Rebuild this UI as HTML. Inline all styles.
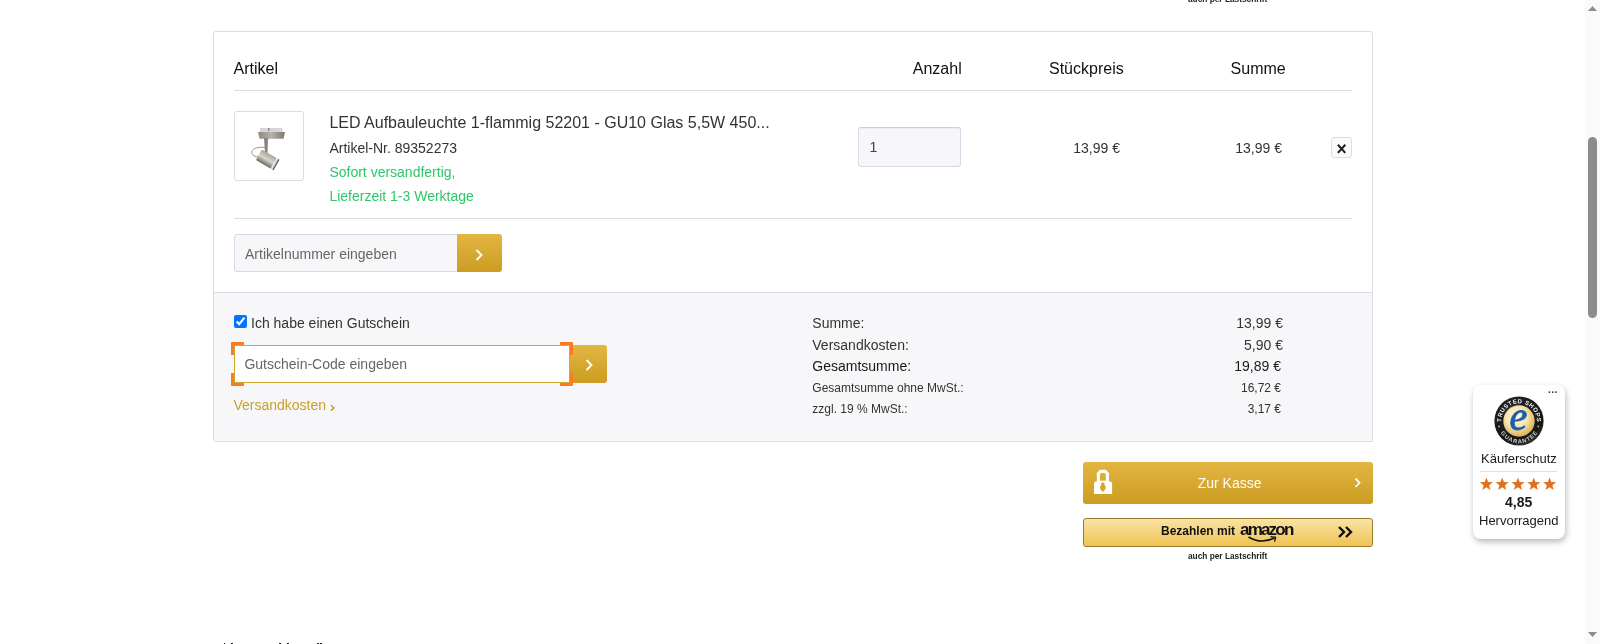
<!DOCTYPE html>
<html><head><meta charset="utf-8">
<style>
*{box-sizing:border-box;margin:0;padding:0}
html,body{width:1600px;height:644px;overflow:hidden;background:#fff;font-family:"Liberation Sans",sans-serif;color:#333}
body{position:relative}
.a{position:absolute;white-space:nowrap;line-height:1}
#wrap{position:absolute;left:0;top:0;width:1600px;height:644px;will-change:transform}
.f16{font-size:16px}.f14{font-size:14px}.f13{font-size:13px}.f12{font-size:12px}
.r{text-align:right}
.gold{background:linear-gradient(#e3b642,#cc9c22)}
.chev{position:absolute;width:7px;height:7px;border-top:2px solid #fff;border-right:2px solid #fff;transform:rotate(45deg)}
</style></head><body><div id="wrap">

<!-- top cut-off amazon label -->
<div class="a" style="left:1188px;top:-5px;font-size:8.3px;font-weight:bold;color:#222;letter-spacing:0">auch per Lastschrift</div>

<!-- card -->
<div class="a" style="left:213px;top:31px;width:1160px;height:411px;border:1px solid #dcdce6;border-radius:3px 3px 1px 3px;background:#fff"></div>
<div class="a" style="left:214px;top:292px;width:1158px;height:149px;background:#f7f7fa;border-top:1px solid #dcdce6;border-radius:0 0 2px 2px"></div>

<div class="a f16" style="left:233.6px;top:61px;color:#111">Artikel</div>
<div class="a f16 r" style="left:861.7px;width:100px;top:61px;color:#111">Anzahl</div>
<div class="a f16 r" style="left:1023.7px;width:100px;top:61px;color:#111">Stückpreis</div>
<div class="a f16 r" style="left:1185.7px;width:100px;top:61px;color:#111">Summe</div>
<div class="a" style="left:234px;top:90px;width:1118px;height:1px;background:#dcdce6"></div>

<!-- product image -->
<div class="a" style="left:234px;top:111px;width:70px;height:70px;border:1px solid #dcdce6;border-radius:3px;background:#fff;overflow:hidden">
<svg width="68" height="68" viewBox="0 0 68 68" style="position:absolute;left:0;top:0">
  <defs>
    <linearGradient id="met" x1="0" x2="1"><stop offset="0" stop-color="#8f8a7e"/><stop offset=".5" stop-color="#b6b2a8"/><stop offset="1" stop-color="#7d786c"/></linearGradient>
    <linearGradient id="cyl" x1="0" y1="0" x2="0" y2="1"><stop offset="0" stop-color="#a9a497"/><stop offset=".5" stop-color="#d8d5cc"/><stop offset="1" stop-color="#6e695e"/></linearGradient>
  </defs>
  <rect x="25" y="16" width="22.5" height="4" fill="#d4d6dc"/><rect x="33" y="16" width="1.5" height="3" fill="#8d8a84"/>
  <polygon points="23,20 50,20 48.5,26.8 24.5,26.8" fill="url(#met)"/>
  <path d="M29 26 H33 L32.5 42 H30 Z" fill="#8a857a"/>
  <path d="M30 35.5 C 20 34, 13 39, 19 44 L 23 45" stroke="#9b978d" stroke-width="1" fill="none"/>
  <g transform="rotate(30 32 47.5)">
    <rect x="22.5" y="41.5" width="19" height="12" rx="1.5" fill="url(#cyl)"/>
    <rect x="39.5" y="41.5" width="2.5" height="12" fill="#e8e8ea"/>
    <rect x="41.5" y="41.5" width="1.5" height="12" fill="#6a655a"/>
  </g>
</svg>
</div>

<div class="a f16" style="left:329.4px;top:115px;color:#333">LED Aufbauleuchte 1-flammig 52201 - GU10 Glas 5,5W 450...</div>
<div class="a f14" style="left:329.4px;top:141px;color:#333">Artikel-Nr. 89352273</div>
<div class="a f14" style="left:329.4px;top:165px;color:#2ec66a">Sofort versandfertig,</div>
<div class="a f14" style="left:329.4px;top:189px;color:#2ec66a">Lieferzeit 1-3 Werktage</div>

<div class="a" style="left:858px;top:127px;width:103px;height:40px;border:1px solid #d8d8e4;border-top-color:#cfcfdc;border-radius:3px;background:#f7f7fa;box-shadow:inset 0 1px 0 rgba(0,0,30,.04)"></div>
<div class="a f14" style="left:869.6px;top:140px;color:#444">1</div>

<div class="a f14 r" style="left:1020px;width:100px;top:141px;color:#333">13,99 €</div>
<div class="a f14 r" style="left:1182px;width:100px;top:141px;color:#333">13,99 €</div>

<div class="a" style="left:1331px;top:137px;width:21px;height:21px;border:1px solid #dcdce6;border-radius:3px;background:#fafafc"></div>
<svg class="a" style="left:1336px;top:143px" width="11" height="11" viewBox="0 0 11 11"><path d="M1.9 1.7 L9.3 9.9 M9.3 1.7 L1.9 9.9" stroke="#222" stroke-width="2.1"/></svg>

<div class="a" style="left:234px;top:218px;width:1118px;height:1px;background:#dcdce6"></div>

<!-- Artikelnummer -->
<div class="a" style="left:234px;top:234px;width:224px;height:38px;border:1px solid #d8d8e4;border-radius:3px 0 0 3px;background:#f7f7fa"></div>
<div class="a f14" style="left:245px;top:247px;color:#666">Artikelnummer eingeben</div>
<div class="a gold" style="left:457px;top:234px;width:45px;height:38px;border-radius:0 3px 3px 0"></div>
<svg class="a" style="left:475px;top:249px" width="9" height="12" viewBox="0 0 9 12"><path d="M1.5 1 L6.5 6 L1.5 11" stroke="#fff" stroke-width="1.85" fill="none"/></svg>

<!-- footer left -->
<input type="checkbox" checked class="a" style="left:234px;top:315px;width:13px;height:13px;margin:0">
<div class="a f14" style="left:251px;top:316px;color:#333">Ich habe einen Gutschein</div>

<div class="a" style="left:234px;top:345px;width:336px;height:38px;border:1px solid #d4a52c;background:#fff"></div>
<div class="a f14" style="left:244.4px;top:357px;color:#666">Gutschein-Code eingeben</div>
<div class="a gold" style="left:570px;top:345px;width:37px;height:38px;border-radius:0 3px 3px 0"></div>
<svg class="a" style="left:584.5px;top:359px" width="9" height="12" viewBox="0 0 9 12"><path d="M1.5 1 L6.5 6 L1.5 11" stroke="#fff" stroke-width="1.85" fill="none"/></svg>
<!-- orange corner marks -->
<div class="a" style="left:231px;top:342px;width:13px;height:3px;background:#fb7a24"></div>
<div class="a" style="left:231px;top:342px;width:3px;height:13px;background:#fb7a24"></div>
<div class="a" style="left:231px;top:383px;width:13px;height:3px;background:#fb7a24"></div>
<div class="a" style="left:231px;top:373px;width:3px;height:13px;background:#fb7a24"></div>
<div class="a" style="left:560px;top:342px;width:13px;height:3px;background:#fb7a24"></div>
<div class="a" style="left:570px;top:342px;width:3px;height:13px;background:#fb7a24"></div>
<div class="a" style="left:560px;top:383px;width:13px;height:3px;background:#fb7a24"></div>
<div class="a" style="left:570px;top:373px;width:3px;height:13px;background:#fb7a24"></div>

<div class="a f14" style="left:233.4px;top:398px;color:#c9a02c">Versandkosten</div>
<svg class="a" style="left:329px;top:403px" width="8" height="10" viewBox="0 0 8 10"><path d="M1.9 2.2 L5 4.9 L1.9 7.6" stroke="#c9a02c" stroke-width="1.5" fill="none"/></svg>

<!-- summary -->
<div class="a f14" style="left:812.3px;top:316px;color:#333">Summe:</div>
<div class="a f14 r" style="left:1183px;width:100px;top:316px;color:#333">13,99 €</div>
<div class="a f14" style="left:812.3px;top:338px;color:#333">Versandkosten:</div>
<div class="a f14 r" style="left:1183px;width:100px;top:338px;color:#333">5,90 €</div>
<div class="a f14" style="left:812.3px;top:359px;color:#1a1a1a">Gesamtsumme:</div>
<div class="a f14 r" style="left:1181px;width:100px;top:359px;color:#1a1a1a">19,89 €</div>
<div class="a f12" style="left:812.3px;top:382px;color:#333">Gesamtsumme ohne MwSt.:</div>
<div class="a f12 r" style="left:1181px;width:100px;top:382px;color:#333">16,72 €</div>
<div class="a f12" style="left:812.3px;top:403px;color:#333">zzgl. 19 % MwSt.:</div>
<div class="a f12 r" style="left:1181px;width:100px;top:403px;color:#333">3,17 €</div>

<!-- Zur Kasse -->
<div class="a gold" style="left:1083px;top:462px;width:290px;height:42px;border-radius:3px"></div>
<svg class="a" style="left:1093px;top:468px" width="20" height="28" viewBox="0 0 20 28">
  <path d="M5.4 15 V5.6 L7.7 3.3 H12.1 L14.4 5.6 V15" stroke="#fff" stroke-width="3.2" fill="none"/>
  <path d="M1 15 L2.5 13.5 H17.6 L19.1 15 V26 H1 Z" fill="#fff"/>
  <rect x="6.5" y="12.7" width="7" height="2" fill="#fff"/><path d="M8.3 14.8 C8.8 14.3 10.9 14.3 11.4 14.8 L11.5 17 C12.9 17.8 13.1 20.6 11.8 22 L9.85 24 L7.9 22 C6.6 20.6 6.8 17.8 8.2 17 Z" fill="#d4a630"/>
</svg>
<div class="a f14" style="left:1197.7px;top:476px;color:#fffdf5">Zur Kasse</div>
<svg class="a" style="left:1353px;top:477px" width="9" height="12" viewBox="0 0 9 12"><path d="M2.5 1.6 L6.6 5.8 L2.5 10" stroke="#fff" stroke-width="1.7" fill="none"/></svg>

<!-- amazon pay -->
<div class="a" style="left:1083px;top:518px;width:290px;height:29px;border:1px solid #9b7b2c;border-radius:3px;background:linear-gradient(#f8e3a6,#f0c453)"></div>
<div class="a" style="left:1161px;top:525px;font-size:12px;font-weight:bold;color:#111">Bezahlen mit</div>
<div class="a" style="left:1240px;top:521px;font-size:17px;font-weight:bold;color:#111;letter-spacing:-1.8px">amazon</div>
<svg class="a" style="left:1247px;top:535px" width="32" height="9" viewBox="0 0 32 9"><path d="M1.5 2 Q 14 9.5 27.5 3" stroke="#111" stroke-width="1.7" fill="none"/><path d="M23.5 1.6 L28.6 2.4 L27.6 6.6" stroke="#111" stroke-width="1.3" fill="none"/></svg>
<svg class="a" style="left:1337px;top:525px" width="17" height="14" viewBox="0 0 17 14"><path d="M2 2 L7 7 L2 12 M9 2 L14 7 L9 12" stroke="#111" stroke-width="2.4" fill="none"/></svg>
<div class="a" style="left:1188px;top:552px;font-size:8.3px;font-weight:bold;color:#222;letter-spacing:0">auch per Lastschrift</div>

<!-- bottom cut-off text marks -->
<div class="a" style="left:223.6px;top:643px;width:1.8px;height:1px;background:#222"></div>
<div class="a" style="left:231px;top:643px;width:2px;height:1px;background:#222"></div>
<div class="a" style="left:278.8px;top:643px;width:1.8px;height:1px;background:#222"></div>
<div class="a" style="left:287px;top:643px;width:2px;height:1px;background:#222"></div>
<div class="a" style="left:317px;top:643px;width:1.8px;height:1px;background:#222"></div>
<div class="a" style="left:320.2px;top:643px;width:1.8px;height:1px;background:#222"></div>

<!-- trusted shops badge -->
<div class="a" style="left:1473px;top:385px;width:92px;height:154px;background:#fff;border-radius:8px;box-shadow:1px 3px 6px rgba(0,0,0,.28)"></div>
<div class="a" style="left:1548px;top:385px;font-size:10px;font-weight:bold;color:#333;letter-spacing:0.5px">...</div>
<svg class="a" style="left:1494px;top:396px" width="50" height="50" viewBox="0 0 50 50">
  <defs>
    <radialGradient id="gg" cx=".42" cy=".38" r=".65"><stop offset="0" stop-color="#fffdf0"/><stop offset=".55" stop-color="#f5e2a8"/><stop offset="1" stop-color="#d8ae4c"/></radialGradient>
    <radialGradient id="rg" cx=".4" cy=".3" r=".75"><stop offset="0" stop-color="#2a2a2a"/><stop offset=".8" stop-color="#151515"/><stop offset="1" stop-color="#3a3a3a"/></radialGradient>
    <path id="tp" d="M7.47 28.1 A17.8 17.8 0 1 1 42.53 28.1"/>
    <path id="bp" d="M3.7 26 A21.3 21.3 0 0 0 46.3 26"/>
  </defs>
  <circle cx="25" cy="25" r="24.6" fill="url(#rg)"/>
  <circle cx="25" cy="25" r="15.7" fill="url(#gg)"/>
  <text font-family="Liberation Sans" font-weight="bold" font-size="6" fill="#eeeeee"><textPath href="#tp" startOffset="50%" text-anchor="middle" textLength="57" lengthAdjust="spacing">TRUSTED SHOPS</textPath></text>
  <text font-family="Liberation Sans" font-weight="bold" font-size="5.8" fill="#d0d0d0"><textPath href="#bp" startOffset="50%" text-anchor="middle" textLength="44" lengthAdjust="spacing">GUARANTEE</textPath></text>
  <circle cx="5" cy="30.5" r="0.9" fill="#e0b040"/>
  <circle cx="44.3" cy="30.5" r="0.9" fill="#e0b040"/>
  <text x="24.5" y="34" text-anchor="middle" font-family="Liberation Serif" font-style="italic" font-size="40" fill="#1d5fa9" stroke="#1d5fa9" stroke-width="0.9">e</text>
</svg>
<div class="a f13" style="left:1481px;top:452px;color:#1a1a1a">Käuferschutz</div>
<div class="a" style="left:1480px;top:471px;width:77px;height:1px;background:#e0e0e0"></div>
<svg class="a" style="left:1478px;top:476px" width="82" height="16" viewBox="0 0 82 16"><polygon points="8.40,1.40 10.10,5.96 14.96,6.17 11.16,9.20 12.46,13.88 8.40,11.20 4.34,13.88 5.64,9.20 1.84,6.17 6.70,5.96" fill="#e36f1e"/><polygon points="24.20,1.40 25.90,5.96 30.76,6.17 26.96,9.20 28.26,13.88 24.20,11.20 20.14,13.88 21.44,9.20 17.64,6.17 22.50,5.96" fill="#e36f1e"/><polygon points="40.00,1.40 41.70,5.96 46.56,6.17 42.76,9.20 44.06,13.88 40.00,11.20 35.94,13.88 37.24,9.20 33.44,6.17 38.30,5.96" fill="#e36f1e"/><polygon points="55.80,1.40 57.50,5.96 62.36,6.17 58.56,9.20 59.86,13.88 55.80,11.20 51.74,13.88 53.04,9.20 49.24,6.17 54.10,5.96" fill="#e36f1e"/><polygon points="71.60,1.40 73.30,5.96 78.16,6.17 74.36,9.20 75.66,13.88 71.60,11.20 67.54,13.88 68.84,9.20 65.04,6.17 69.90,5.96" fill="#e36f1e"/></svg>
<div class="a" style="left:1505px;top:495px;font-size:14px;font-weight:bold;color:#1a1a1a">4,85</div>
<div class="a f13" style="left:1479px;top:514px;color:#1a1a1a">Hervorragend</div>

<!-- scrollbar -->
<div class="a" style="left:1585px;top:0;width:15px;height:644px;background:#fafafa"></div>
<div class="a" style="left:1588px;top:137px;width:9px;height:181px;background:#8c8c8c;border-radius:5px"></div>
<svg class="a" style="left:1587px;top:5px" width="11" height="7" viewBox="0 0 11 7"><path d="M1 6 L5.5 1 L10 6 Z" fill="#8c8c8c"/></svg>
<svg class="a" style="left:1587px;top:631px" width="11" height="7" viewBox="0 0 11 7"><path d="M1 1 L5.5 6 L10 1 Z" fill="#8c8c8c"/></svg>

</div></body></html>
